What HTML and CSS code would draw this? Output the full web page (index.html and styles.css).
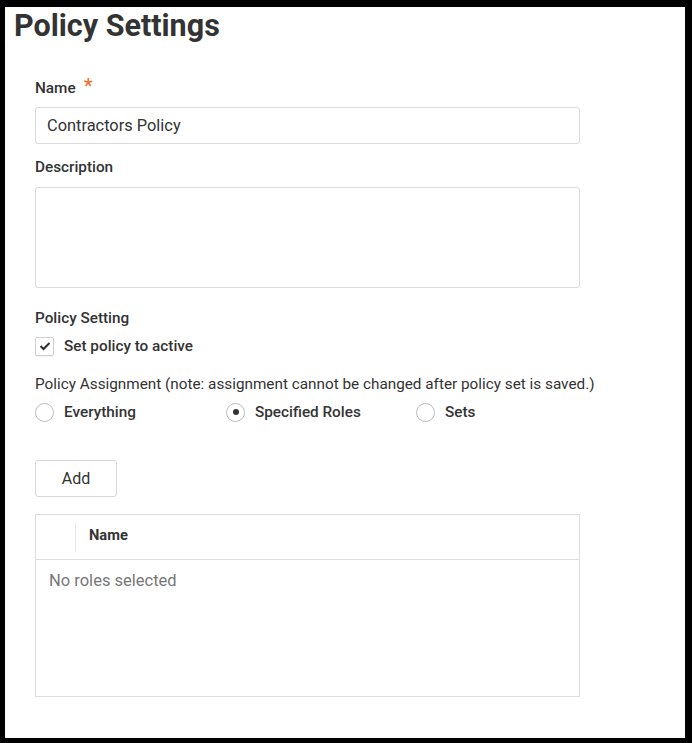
FILE: index.html
```html
<!DOCTYPE html>
<html lang="en">
<head>
<meta charset="utf-8">
<title>Policy Settings</title>
<link rel="stylesheet" href="styles.css">
</head>
<body>
<div class="page">
  <h1 class="title">Policy Settings</h1>
  <form class="form">
    <div class="field field-name">
      <label class="label">Name <span class="req">*</span></label>
      <input class="input" type="text" value="Contractors Policy">
    </div>
    <div class="field field-desc">
      <label class="label">Description</label>
      <div class="textarea"></div>
    </div>
    <div class="field field-setting">
      <div class="label">Policy Setting</div>
      <div class="check-row">
        <span class="checkbox">
          <svg width="12" height="10" viewBox="0 0 12 10"><polyline points="1.5,5 4.5,8 10.5,2" fill="none" stroke="#2f2f2f" stroke-width="2"/></svg>
        </span>
        <span class="opt-text">Set policy to active</span>
      </div>
    </div>
    <div class="field field-assign">
      <div class="label note">Policy Assignment (note: assignment cannot be changed after policy set is saved.)</div>
      <div class="radio-row">
        <div class="radio-opt"><span class="radio"></span><span class="opt-text">Everything</span></div>
        <div class="radio-opt"><span class="radio checked"><span class="dot"></span></span><span class="opt-text">Specified Roles</span></div>
        <div class="radio-opt"><span class="radio"></span><span class="opt-text">Sets</span></div>
      </div>
    </div>
    <button type="button" class="btn">Add</button>
    <div class="table">
      <div class="thead">
        <div class="th-sel"></div>
        <div class="th-name">Name</div>
      </div>
      <div class="tbody">No roles selected</div>
    </div>
  </form>
</div>
</body>
</html>
```
FILE: styles.css
```css
html, body {
  margin: 0;
  background: #000;
}
body {
  padding: 7px 7px 5px 5px;
  font-family: Roboto, "Liberation Sans", Arial, sans-serif;
  color: #333;
}
.page {
  background: #fff;
  height: 731px;
  box-sizing: border-box;
  padding-top: 3px;
}
.title {
  margin: 0;
  padding-left: 9px;
  font-size: 30.5px;
  line-height: 32px;
  font-weight: 700;
  color: #333;
}
.form {
  margin: 34px 0 0 30px;
  width: 545px;
}
.label {
  display: flex;
  align-items: baseline;
  font-size: 15.3px;
  line-height: 20px;
  font-weight: 500;
  color: #333;
}
.label.note {
  font-weight: 400;
  white-space: nowrap;
}
.req {
  color: #f26b2a;
  font-size: 21px;
  line-height: 20px;
  margin-left: 8px;
  font-weight: 400;
}
.field-name .label { margin-bottom: 9px; }
.field-name { margin-bottom: 13px; }
.field-desc .label { margin-bottom: 10px; }
.field-desc { margin-bottom: 20px; }
.field-setting .label { margin-bottom: 8px; }
.field-setting { margin-bottom: 18px; }
.field-assign .label { margin-bottom: 8px; }
.field-assign { margin-bottom: 38px; }
.input {
  display: block;
  width: 100%;
  height: 37px;
  box-sizing: border-box;
  border: 1px solid #dadada;
  border-radius: 3px;
  padding: 0 11px;
  font-family: inherit;
  font-size: 16.4px;
  color: #333;
  outline: none;
}
.textarea {
  height: 101px;
  border: 1px solid #dadada;
  border-radius: 3px;
  box-sizing: border-box;
}
.check-row {
  display: flex;
  align-items: center;
  height: 20px;
}
.checkbox {
  width: 19px;
  height: 19px;
  box-sizing: border-box;
  border: 1px solid #cfcfcf;
  border-radius: 2px;
  display: flex;
  align-items: center;
  justify-content: center;
  margin-right: 10px;
  box-shadow: 0 1px 1px rgba(0,0,0,0.06);
}
.opt-text {
  font-size: 15.3px;
  line-height: 20px;
  font-weight: 500;
  color: #333;
}
.radio-row {
  display: grid;
  grid-template-columns: 191px 190px auto;
  height: 20px;
}
.radio-opt {
  display: flex;
  align-items: center;
}
.radio {
  width: 19px;
  height: 19px;
  box-sizing: border-box;
  border: 1px solid #bdbdbd;
  border-radius: 50%;
  margin-right: 10px;
  display: flex;
  align-items: center;
  justify-content: center;
}
.dot {
  width: 6px;
  height: 6px;
  border-radius: 50%;
  background: #333;
}
.btn {
  display: block;
  width: 82px;
  height: 37px;
  border: 1px solid #d8d8d8;
  border-radius: 3px;
  background: #fff;
  font-family: inherit;
  font-size: 16px;
  color: #333;
  padding: 0;
  margin-bottom: 17px;
}
.table {
  border: 1px solid #dedede;
  height: 183px;
  box-sizing: border-box;
}
.thead {
  display: flex;
  height: 45px;
  box-sizing: border-box;
  border-bottom: 1px solid #dedede;
}
.th-sel {
  width: 39px;
  height: 29px;
  margin-top: 8px;
  border-right: 1px solid #e6e6e6;
}
.th-name {
  padding: 10px 0 0 13px;
  font-size: 14.7px;
  line-height: 20px;
  font-weight: 700;
  color: #333;
}
.tbody {
  padding: 11px 0 0 13px;
  font-size: 16.5px;
  line-height: 20px;
  color: #777;
}
```
